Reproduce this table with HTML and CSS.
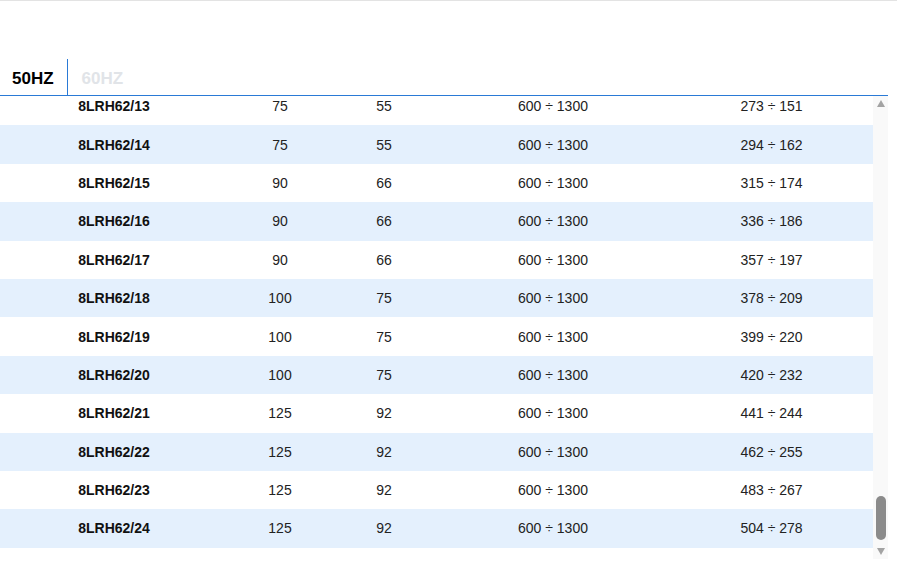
FILE: index.html
```html
<!DOCTYPE html>
<html lang="en">
<head>
<meta charset="utf-8">
<title>8LRH62 – Performance table</title>
<link rel="stylesheet" href="styles.css">
</head>
<body>
<div class="page">
  <div class="topline"></div>
  <div class="tabs">
    <div class="tab tab-active">50HZ</div>
    <div class="tab tab-inactive">60HZ</div>
  </div>
  <div class="viewport">
    <div class="scroller" id="scroller">
      <div class="table">
        <div class="row"><div class="cell model">8LRH62/13</div><div class="cell">75</div><div class="cell">55</div><div class="cell">600 ÷ 1300</div><div class="cell">273 ÷ 151</div></div>
        <div class="row"><div class="cell model">8LRH62/14</div><div class="cell">75</div><div class="cell">55</div><div class="cell">600 ÷ 1300</div><div class="cell">294 ÷ 162</div></div>
        <div class="row"><div class="cell model">8LRH62/15</div><div class="cell">90</div><div class="cell">66</div><div class="cell">600 ÷ 1300</div><div class="cell">315 ÷ 174</div></div>
        <div class="row"><div class="cell model">8LRH62/16</div><div class="cell">90</div><div class="cell">66</div><div class="cell">600 ÷ 1300</div><div class="cell">336 ÷ 186</div></div>
        <div class="row"><div class="cell model">8LRH62/17</div><div class="cell">90</div><div class="cell">66</div><div class="cell">600 ÷ 1300</div><div class="cell">357 ÷ 197</div></div>
        <div class="row"><div class="cell model">8LRH62/18</div><div class="cell">100</div><div class="cell">75</div><div class="cell">600 ÷ 1300</div><div class="cell">378 ÷ 209</div></div>
        <div class="row"><div class="cell model">8LRH62/19</div><div class="cell">100</div><div class="cell">75</div><div class="cell">600 ÷ 1300</div><div class="cell">399 ÷ 220</div></div>
        <div class="row"><div class="cell model">8LRH62/20</div><div class="cell">100</div><div class="cell">75</div><div class="cell">600 ÷ 1300</div><div class="cell">420 ÷ 232</div></div>
        <div class="row"><div class="cell model">8LRH62/21</div><div class="cell">125</div><div class="cell">92</div><div class="cell">600 ÷ 1300</div><div class="cell">441 ÷ 244</div></div>
        <div class="row"><div class="cell model">8LRH62/22</div><div class="cell">125</div><div class="cell">92</div><div class="cell">600 ÷ 1300</div><div class="cell">462 ÷ 255</div></div>
        <div class="row"><div class="cell model">8LRH62/23</div><div class="cell">125</div><div class="cell">92</div><div class="cell">600 ÷ 1300</div><div class="cell">483 ÷ 267</div></div>
        <div class="row"><div class="cell model">8LRH62/24</div><div class="cell">125</div><div class="cell">92</div><div class="cell">600 ÷ 1300</div><div class="cell">504 ÷ 278</div></div>
      </div>
    </div>
    <div class="scrollbar" aria-hidden="true">
      <div class="sb-button">
        <svg width="8" height="7" viewBox="0 0 8 7"><polygon points="4,0 8,7 0,7" fill="#a3a3a3"/></svg>
      </div>
      <div class="sb-track">
        <div class="sb-thumb"></div>
      </div>
      <div class="sb-button">
        <svg width="8" height="7" viewBox="0 0 8 7"><polygon points="0,0 8,0 4,7" fill="#a3a3a3"/></svg>
      </div>
    </div>
  </div>
</div>
<script src="script.js"></script>
</body>
</html>
```

FILE: styles.css
```css
html, body {
  margin: 0;
  padding: 0;
  background: #ffffff;
}
body {
  font-family: "Liberation Sans", Arial, sans-serif;
  color: #222222;
}
.page {
  width: 888px;
  display: flex;
  flex-direction: column;
}
.topline {
  height: 1px;
  width: 897px;
  background: #e3e3e3;
  margin-bottom: 58px;
}
.tabs {
  display: flex;
  height: 36px;
  border-bottom: 1px solid #2a7ad6;
}
.tab {
  display: flex;
  align-items: center;
  font-size: 17px;
  font-weight: bold;
  line-height: 1;
  padding-top: 2px;
  box-sizing: border-box;
}
.tab-active {
  color: #000000;
  padding-left: 12px;
  padding-right: 13px;
  border-right: 1px solid #2a7ad6;
}
.tab-inactive {
  color: #e1e4e8;
  padding-left: 14px;
}
.viewport {
  position: relative;
  height: 463px;
}
.scroller {
  height: 100%;
  overflow-y: scroll;
  scrollbar-width: none;
}
.scroller::-webkit-scrollbar {
  display: none;
}
.table {
  display: flex;
  flex-direction: column;
  padding-bottom: 11px;
}
.row {
  display: grid;
  grid-template-columns: 228px 104px 104px 234px 203px;
  height: 38.4px;
  flex: none;
  align-items: center;
  font-size: 14px;
}
.row:nth-child(even) {
  background: #e4f0fd;
}
.cell {
  text-align: center;
  color: #222222;
}
.model {
  font-weight: bold;
  color: #111111;
}
.scrollbar {
  position: absolute;
  top: 0;
  right: 0;
  bottom: 0;
  width: 15px;
  background: #f9f9f9;
  display: flex;
  flex-direction: column;
}
.sb-button {
  height: 15px;
  flex: none;
  display: flex;
  align-items: center;
  justify-content: center;
}
.sb-button svg {
  display: block;
}
.sb-track {
  flex: 1;
  display: flex;
  flex-direction: column;
  justify-content: flex-end;
  align-items: center;
  padding-bottom: 4px;
}
.sb-thumb {
  width: 10px;
  height: 44px;
  border-radius: 5px;
  background: #8b8b8b;
}
```

FILE: script.js
```js
(function () {
  var scroller = document.getElementById('scroller');
  scroller.scrollTop = scroller.scrollHeight;
})();
```
